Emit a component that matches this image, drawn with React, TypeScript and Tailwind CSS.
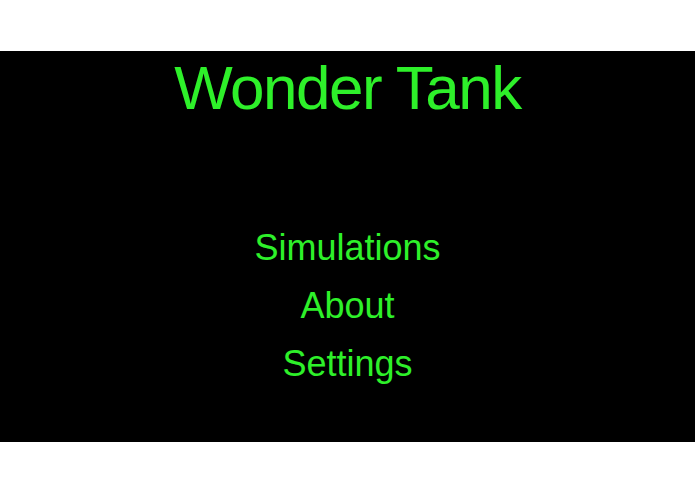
export default function App() {
  return (
    <main className="min-h-screen bg-white font-['Liberation_Sans',Arial,sans-serif]">
      <div className="h-[51px]" />
      <section className="h-[391px] bg-black flex flex-col items-center pt-[6px] text-[#2ef02a]">
        <h1 className="text-[62px] leading-none tracking-[-1.5px]">Wonder Tank</h1>
        <nav className="mt-[111px] flex flex-col items-center gap-[22px] text-[36px] leading-none">
          <a>Simulations</a>
          <a>About</a>
          <a>Settings</a>
        </nav>
      </section>
    </main>
  );
}
